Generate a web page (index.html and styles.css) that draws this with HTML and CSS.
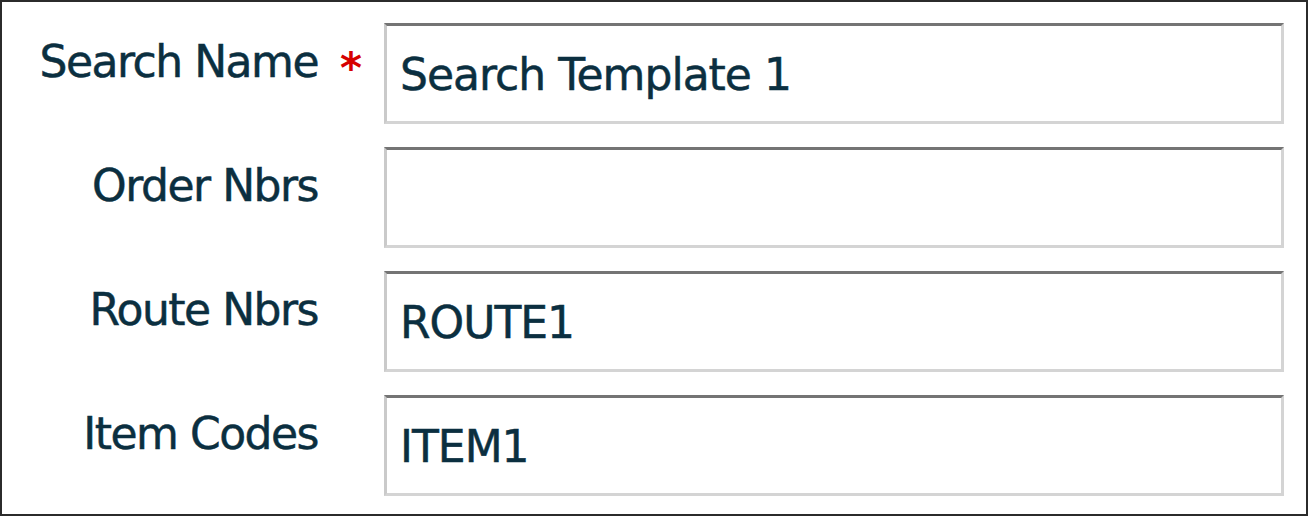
FILE: index.html
```html
<!DOCTYPE html>
<html lang="en">
<head>
    <meta charset="UTF-8">
    <meta name="viewport" content="width=device-width, initial-scale=1.0">
    <title>Search Template</title>
    <link rel="stylesheet" href="styles.css">
</head>
<body>
    <form class="panel">
        <div class="row">
            <label class="field-label" for="searchName">Search Name</label>
            <span class="req">*</span>
            <input class="field-input" type="text" id="searchName" value="Search Template 1">
        </div>

        <div class="row">
            <label class="field-label" for="orderNbrs">Order Nbrs</label>
            <span class="req"></span>
            <input class="field-input" type="text" id="orderNbrs" value="">
        </div>

        <div class="row">
            <label class="field-label" for="routeNbrs">Route Nbrs</label>
            <span class="req"></span>
            <input class="field-input" type="text" id="routeNbrs" value="ROUTE1">
        </div>

        <div class="row">
            <label class="field-label" for="itemCodes">Item Codes</label>
            <span class="req"></span>
            <input class="field-input" type="text" id="itemCodes" value="ITEM1">
        </div>
    </form>
</body>
</html>
```

FILE: styles.css
```css
body {
    margin: 0;
    background: white;
}
.panel {
    width: 1308px;
    height: 516px;
    box-sizing: border-box;
    border: 2px solid #2b2b2b;
    padding-top: 21px;
    display: flex;
    flex-direction: column;
    gap: 23px;
    font-family: "DejaVu Sans", Verdana, sans-serif;
    color: #0b2f40;
}
.row {
    display: grid;
    grid-template-columns: 316px 66px 900px;
    align-items: start;
}
.field-label {
    text-align: right;
    font-size: 44px;
    letter-spacing: -1.5px;
    line-height: 52px;
    padding-top: 13px;
    -webkit-text-stroke: 0.5px currentColor;
}
.req {
    color: #d60000;
    font-size: 42px;
    font-weight: bold;
    line-height: 52px;
    padding-top: 20px;
    padding-left: 22px;
}
.field-input {
    box-sizing: border-box;
    width: 900px;
    height: 101px;
    margin: 0;
    padding: 0 13px;
    padding-top: 2px;
    border-top: 3px solid #747474;
    border-left: 3px solid #cacaca;
    border-right: 3px solid #d4d4d4;
    border-bottom: 3px solid #d4d4d4;
    font-family: "DejaVu Sans", Verdana, sans-serif;
    font-size: 44px;
    letter-spacing: -1px;
    color: #0b2f40;
    -webkit-text-stroke: 0.5px currentColor;
    background: white;
    outline: none;
}
```
